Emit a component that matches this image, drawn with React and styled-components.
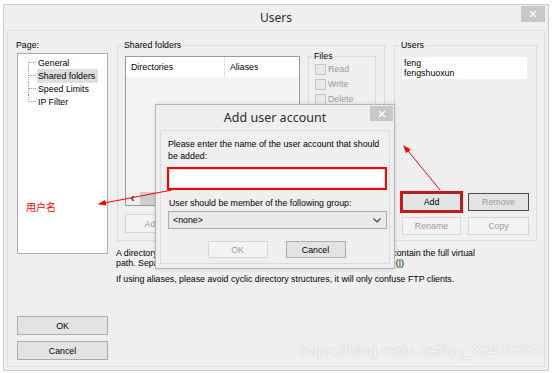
import React from 'react'
import styled, { createGlobalStyle } from 'styled-components'

const GlobalStyle = createGlobalStyle`
  html, body {
    margin: 0;
    padding: 0;
    background: #fff;
  }
  body {
    width: 554px;
    height: 373px;
    overflow: hidden;
    font-family: "Liberation Sans", Arial, sans-serif;
    font-size: 8.8px;
    color: #000;
  }
  * { box-sizing: border-box; }
`

function CloseIcon() {
    return (
        <svg width="8" height="8" viewBox="0 0 8 8">
            <path d="M1 1L7 7M7 1L1 7" stroke="#fff" strokeWidth="1.3" />
        </svg>
    )
}

function Chevron() {
    return (
        <svg width="8" height="5" viewBox="0 0 8 5">
            <path d="M0.5 0.5L4 4L7.5 0.5" stroke="#444" strokeWidth="1.2" fill="none" />
        </svg>
    )
}

function TreeLine({ first, last }) {
    return (
        <svg width="10" height="13" viewBox="0 0 10 13">
            <line x1="1.5" y1={first ? 6.5 : 0} x2="1.5" y2={last ? 6.5 : 13} stroke="#9a9a9a" strokeDasharray="1 1" />
            <line x1="2" y1="6.5" x2="10" y2="6.5" stroke="#9a9a9a" strokeDasharray="1 1" />
        </svg>
    )
}

const pages = ['General', 'Shared folders', 'Speed Limits', 'IP Filter']
const files = ['Read', 'Write', 'Delete']

export default function App() {
    return (
        <>
            <GlobalStyle />
            <Screen>
                <Window>
                    <TitleBar>
                        <span />
                        <Title>Users</Title>
                        <CloseButton><CloseIcon /></CloseButton>
                    </TitleBar>
                    <Body>
                        <Sidebar>
                            <FieldLabel>Page:</FieldLabel>
                            <Tree>
                                {pages.map((p, i) => (
                                    <TreeItem key={p}>
                                        <TreeLine first={i === 0} last={i === pages.length - 1} />
                                        <TreeText $selected={p === 'Shared folders'}>{p}</TreeText>
                                    </TreeItem>
                                ))}
                            </Tree>
                            <SideButtons>
                                <Button>OK</Button>
                                <Button>Cancel</Button>
                            </SideButtons>
                        </Sidebar>
                        <Main>
                            <Groups>
                                <Group $w={268}>
                                    <Legend>Shared folders</Legend>
                                    <SharedGrid>
                                        <ListView>
                                            <ListHeader>
                                                <HeaderCell $w={99}>Directories</HeaderCell>
                                                <HeaderCell>Aliases</HeaderCell>
                                            </ListHeader>
                                            <ListBody />
                                            <HScroll>
                                                <ScrollArrow>&lsaquo;</ScrollArrow>
                                                <ScrollThumb />
                                            </HScroll>
                                        </ListView>
                                        <FilesGroup>
                                            <Legend>Files</Legend>
                                            {files.map(f => (
                                                <CheckRow key={f}>
                                                    <CheckBox />
                                                    <span>{f}</span>
                                                </CheckRow>
                                            ))}
                                        </FilesGroup>
                                        <DirButtons>
                                            <Button $disabled $w={56}>Add</Button>
                                            <Button $disabled $w={56}>Remove</Button>
                                            <Button $disabled $w={56}>Rename</Button>
                                            <Button $disabled $w={70}>Set as home dir</Button>
                                        </DirButtons>
                                    </SharedGrid>
                                </Group>
                                <Group $w={143}>
                                    <Legend>Users</Legend>
                                    <UserList>
                                        <div>feng</div>
                                        <div>fengshuoxun</div>
                                    </UserList>
                                    <UserButtons>
                                        <Button $default $marked>Add</Button>
                                        <Button $dark>Remove</Button>
                                        <Button $disabled>Rename</Button>
                                        <Button $disabled>Copy</Button>
                                    </UserButtons>
                                </Group>
                            </Groups>
                            <Help>
                                <p>A directory alias will also appear at the specified location. Aliases must contain the full virtual path. Separate multiple aliases for one directory with the pipe character (|)</p>
                                <p>If using aliases, please avoid cyclic directory structures, it will only confuse FTP clients.</p>
                            </Help>
                        </Main>
                    </Body>

                    <Dialog>
                        <TitleBar $small>
                            <span />
                            <DialogTitle>Add user account</DialogTitle>
                            <CloseButton $small><CloseIcon /></CloseButton>
                        </TitleBar>
                        <DialogBody>
                            <Prompt>Please enter the name of the user account that should be added:</Prompt>
                            <NameInput />
                            <GroupLabel>User should be member of the following group:</GroupLabel>
                            <Select>
                                <span>&lt;none&gt;</span>
                                <Chevron />
                            </Select>
                            <DialogButtons>
                                <Button $disabled $w={60} $h={17}>OK</Button>
                                <Button $w={60} $h={17}>Cancel</Button>
                            </DialogButtons>
                        </DialogBody>
                    </Dialog>
                </Window>

                <Arrows width="554" height="373" viewBox="0 0 554 373">
                    <defs>
                        <marker id="head" markerWidth="8" markerHeight="6" refX="7" refY="3" orient="auto" markerUnits="userSpaceOnUse">
                            <path d="M0 0L8 3L0 6Z" fill="#f00" />
                        </marker>
                    </defs>
                    <line x1="172" y1="190" x2="99" y2="204" stroke="#f00" strokeWidth="1" markerEnd="url(#head)" />
                    <line x1="440" y1="190" x2="404" y2="146" stroke="#f00" strokeWidth="1" markerEnd="url(#head)" />
                </Arrows>
                <Note>用户名</Note>
                <Watermark>https://blog.csdn.net/qq_33435280</Watermark>
            </Screen>
        </>
    )
}

const Screen = styled.div`
    position: relative;
    width: 554px;
    height: 373px;
    padding: 4px 0 0 3px;
`

const Window = styled.div`
    position: relative;
    width: 546px;
    height: 367px;
    border: 1px solid #cdcdcd;
    background: #efefef;
    display: flex;
    flex-direction: column;
`

const TitleBar = styled.div`
    height: 25px;
    flex: none;
    display: grid;
    grid-template-columns: 1fr auto 1fr;
    align-items: center;
`

const Title = styled.div`
    font-family: "Noto Sans", sans-serif;
    font-size: 12px;
    color: #2b2b2b;
    line-height: 16px;
`

const DialogTitle = styled(Title)`
    font-size: 12.5px;
`

const CloseButton = styled.div`
    justify-self: end;
    align-self: start;
    margin: ${p => p.$small ? '1px 1px 0 0' : '1px 3px 0 0'};
    width: ${p => p.$small ? 23 : 24}px;
    height: ${p => p.$small ? 15 : 16}px;
    background: #c7c7c7;
    display: flex;
    align-items: center;
    justify-content: center;
`

const Body = styled.div`
    flex: 1;
    margin: 0 3px 3px;
    border: 1px solid #dcdcdc;
    display: grid;
    grid-template-columns: 91px 1fr;
    column-gap: 9px;
    padding: 9px 7px 6px 9px;
`

const Sidebar = styled.div`
    display: flex;
    flex-direction: column;
`

const FieldLabel = styled.div`
    line-height: 10px;
    margin: 0 0 3px -1px;
`

const Tree = styled.div`
    height: 201px;
    background: #fff;
    border: 1px solid #ababab;
    padding: 2px 0 0 9px;
`

const TreeItem = styled.div`
    height: 13px;
    display: flex;
    align-items: center;
`

const TreeText = styled.span`
    line-height: 14px;
    padding: 0 3px 0 1px;
    background: ${p => p.$selected ? '#dedede' : 'transparent'};
`

const SideButtons = styled.div`
    margin-top: auto;
    display: flex;
    flex-direction: column;
    gap: 6px;
`

const Button = styled.div`
    width: ${p => p.$w ? p.$w + 'px' : 'auto'};
    height: ${p => p.$h || 19}px;
    display: flex;
    align-items: center;
    justify-content: center;
    white-space: nowrap;
    overflow: hidden;
    background: ${p => p.$disabled ? '#f3f3f3' : '#e3e3e3'};
    border: 1px solid ${p => p.$disabled ? '#d6d6d6' : (p.$default || p.$dark) ? '#4a4a4a' : '#adadad'};
    color: ${p => (p.$disabled || p.$dark) ? '#9c9c9c' : '#000'};
    outline: ${p => p.$marked ? '2px solid #f00' : 'none'};
`

const Main = styled.div`
    display: flex;
    flex-direction: column;
`

const Groups = styled.div`
    height: 201px;
    display: flex;
    gap: 9px;
`

const Group = styled.fieldset`
    margin: 0;
    min-width: 0;
    width: ${p => p.$w}px;
    border: 1px solid #dcdcdc;
    padding: 6px 7px 5px;
    display: flex;
    flex-direction: column;
`

const Legend = styled.legend`
    padding: 0 1px;
    margin-left: -2px;
    line-height: 10px;
`

const SharedGrid = styled.div`
    display: grid;
    grid-template-columns: 175px 68px;
    grid-template-rows: 150px 18px;
    column-gap: 8px;
    row-gap: 8px;
`

const ListView = styled.div`
    border: 1px solid #9a9a9a;
    display: flex;
    flex-direction: column;
    background: #f4f4f4;
`

const ListHeader = styled.div`
    height: 20px;
    display: flex;
    background: #fff;
`

const HeaderCell = styled.div`
    width: ${p => p.$w ? p.$w + 'px' : 'auto'};
    flex: ${p => p.$w ? 'none' : 1};
    padding-left: 5px;
    line-height: 20px;
    border-right: ${p => p.$w ? '1px solid #e5e5e5' : 'none'};
`

const ListBody = styled.div`
    flex: 1;
`

const HScroll = styled.div`
    height: 13px;
    display: flex;
    background: #efefef;
`

const ScrollArrow = styled.div`
    width: 13px;
    line-height: 12px;
    text-align: center;
    font-size: 12px;
    font-weight: bold;
    color: #333;
`

const ScrollThumb = styled.div`
    width: 60px;
    margin-left: 1px;
    background: #cdcdcd;
`

const FilesGroup = styled.fieldset`
    margin: -5px 0 0;
    min-width: 0;
    border: 1px solid #dcdcdc;
    padding: 3px 4px 0 6px;
`

const CheckRow = styled.div`
    height: 15px;
    display: flex;
    align-items: flex-start;
    gap: 2px;
    color: #9a9a9a;
    line-height: 11px;
`

const CheckBox = styled.div`
    width: 11px;
    height: 11px;
    border: 1px solid #c6c6c6;
    background: #e8e8e8;
`

const DirButtons = styled.div`
    grid-column: 1 / 3;
    display: flex;
    gap: 6px;
`

const UserList = styled.div`
    width: 125px;
    height: 22px;
    margin-top: 1px;
    background: #fff;
    padding: 1px 0 0 2px;
    line-height: 10px;
`

const UserButtons = styled.div`
    margin-top: auto;
    display: grid;
    grid-template-columns: 59px 61px;
    grid-auto-rows: 18px;
    column-gap: 7px;
    row-gap: 6px;
    & > div { height: 18px; }
`

const Help = styled.div`
    margin: 7px 0 0 -1px;
    width: 370px;
    line-height: 10px;
    p { margin: 0 0 6px; }
`

const Dialog = styled.div`
    position: absolute;
    left: 151px;
    top: 99px;
    width: 240px;
    height: 165px;
    background: #efefef;
    border: 1px solid #b4b4b4;
    box-shadow: 0 0 4px rgba(0, 0, 0, 0.12);
    display: flex;
    flex-direction: column;
`

const DialogBody = styled.div`
    flex: 1;
    margin: 0 4px 4px;
    border: 1px solid #dcdcdc;
    padding: 7px 3px 0 6px;
    display: flex;
    flex-direction: column;
`

const Prompt = styled.div`
    line-height: 12px;
    padding-left: 1px;
`

const NameInput = styled.div`
    width: 220px;
    height: 23px;
    margin-top: 5px;
    border: 2px solid #f00;
    background: #fff;
    box-shadow: inset 0 0 0 1px #e3e3e3;
`

const GroupLabel = styled.div`
    margin-top: 8px;
    line-height: 10px;
    padding-left: 2px;
`

const Select = styled.div`
    width: 219px;
    height: 18px;
    margin: 3px 0 0 1px;
    border: 1px solid #adadad;
    background: #eaeaea;
    display: flex;
    align-items: center;
    justify-content: space-between;
    padding: 0 5px 0 4px;
`

const DialogButtons = styled.div`
    margin-top: 12px;
    display: flex;
    justify-content: center;
    gap: 18px;
`

const Arrows = styled.svg`
    position: absolute;
    left: 0;
    top: 0;
    pointer-events: none;
`

const Note = styled.div`
    position: absolute;
    left: 26px;
    top: 200px;
    font-family: "Noto Sans CJK SC", sans-serif;
    font-size: 10px;
    line-height: 13px;
    color: #f00;
`

const Watermark = styled.div`
    position: absolute;
    left: 300px;
    top: 341px;
    font-family: "Liberation Sans", Arial, sans-serif;
    font-size: 15.8px;
    line-height: 20px;
    color: #f8f8f8;
    text-shadow: 0 0 1px rgba(0, 0, 0, 0.28);
    pointer-events: none;
`
